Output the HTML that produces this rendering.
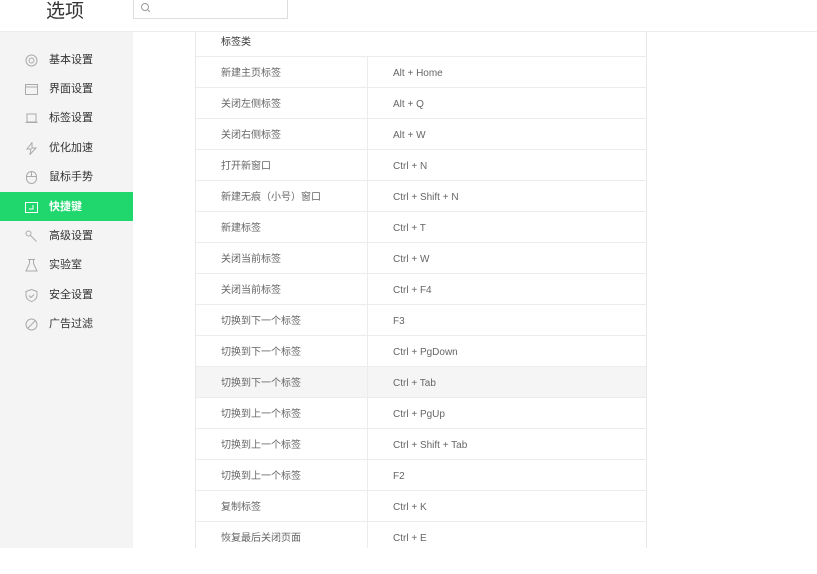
<!DOCTYPE html>
<html><head><meta charset="utf-8"><style>
*{margin:0;padding:0;box-sizing:border-box}
body{width:817px;height:574px;background:#fff;font-family:"Liberation Sans","Noto Sans CJK SC",sans-serif;position:relative;overflow:hidden;color:#555}
.top{position:absolute;left:0;top:0;width:817px;height:32px;border-bottom:1px solid #ececec}
.title{position:absolute;left:46px;top:-4px;font-size:19px;color:#333}
.search{position:absolute;left:133px;top:-2px;width:155px;height:21px;border:1px solid #ddd;border-top:none}
.side{position:absolute;left:0;top:32px;width:133px;height:516px;background:#f4f4f4}
.item{position:absolute;left:0;width:133px;height:29px;font-size:11px;color:#333;line-height:31px}
.item span{position:absolute;left:49px}
.item svg{position:absolute;left:25px;top:9px}
.item.act{background:#1fd76c;color:#fff;font-weight:bold}
.tbl{position:absolute;left:195px;top:32px;width:452px;height:516px;border-left:1px solid #e8e8e8;border-right:1px solid #e8e8e8;overflow:hidden}
.row{position:absolute;left:0;width:450px;height:31px;border-bottom:1px solid #ececec;font-size:10px;line-height:34px;color:#666}
.row .a{position:absolute;left:25px}
.row .b{position:absolute;left:171px;top:0;height:30px;border-left:1px solid #ececec;padding-left:25px}
.hd{top:0;height:25px;line-height:22px;color:#333}
</style></head><body>
<div class="top"><div class="title">选项</div><div class="search"><svg width="12" height="12" style="position:absolute;left:6px;top:4px" viewBox="0 0 12 12"><circle cx="5" cy="5" r="3.5" fill="none" stroke="#999" stroke-width="1"/><path d="M7.6 7.6L10 10" stroke="#999"/></svg></div></div>
<div class="side">
<div class="item" style="top:13px"><svg width="13" height="13" viewBox="0 0 13 13" fill="none" stroke="#aaa"><circle cx="6.5" cy="6.5" r="5.5"/><circle cx="6.5" cy="6.5" r="2.5"/></svg><span>基本设置</span></div>
<div class="item" style="top:42px"><svg width="13" height="13" viewBox="0 0 13 13" fill="none" stroke="#aaa"><rect x=".5" y="1.5" width="12" height="10"/><path d="M.5 4h12"/></svg><span>界面设置</span></div>
<div class="item" style="top:71px"><svg width="13" height="13" viewBox="0 0 13 13" fill="none" stroke="#aaa"><path d="M2 2h9v8H2zM.5 10.5h12"/></svg><span>标签设置</span></div>
<div class="item" style="top:101px"><svg width="13" height="13" viewBox="0 0 13 13" fill="none" stroke="#aaa"><path d="M7 .5L2 7h4l-1 5.5L11 6H7z"/></svg><span>优化加速</span></div>
<div class="item" style="top:130px"><svg width="13" height="13" viewBox="0 0 13 13" fill="none" stroke="#aaa"><rect x="1.5" y=".5" width="10" height="12" rx="5"/><path d="M1.5 5.5h10M6.5.5v5"/></svg><span>鼠标手势</span></div>
<div class="item act" style="top:160px"><svg width="13" height="13" viewBox="0 0 13 13" fill="none" stroke="#fff"><rect x=".5" y="1.5" width="12" height="10"/><path d="M8 4v4H4"/></svg><span>快捷键</span></div>
<div class="item" style="top:189px"><svg width="13" height="13" viewBox="0 0 13 13" fill="none" stroke="#aaa"><circle cx="3.5" cy="3.5" r="2.5"/><path d="M5.5 5.5l6 6"/></svg><span>高级设置</span></div>
<div class="item" style="top:218px"><svg width="13" height="13" viewBox="0 0 13 13" fill="none" stroke="#aaa"><path d="M3 .5h7M4.5.5v4L1 12h11L8.5 4.5v-4"/></svg><span>实验室</span></div>
<div class="item" style="top:248px"><svg width="13" height="13" viewBox="0 0 13 13" fill="none" stroke="#aaa"><path d="M6.5.5L1 2.5v4c0 3 3 5.5 5.5 6 2.5-.5 5.5-3 5.5-6v-4z"/><path d="M4 6.5l2 2 3-3"/></svg><span>安全设置</span></div>
<div class="item" style="top:277px"><svg width="13" height="13" viewBox="0 0 13 13" fill="none" stroke="#aaa"><circle cx="6.5" cy="6.5" r="5.5"/><path d="M2.6 10.4l7.8-7.8"/></svg><span>广告过滤</span></div>
</div>
<div class="tbl">
<div class="row hd"><span class="a" style="color:#333">标签类</span></div>
<div class="row" style="top:25px"><span class="a">新建主页标签</span><span class="b">Alt + Home</span></div>
<div class="row" style="top:56px"><span class="a">关闭左侧标签</span><span class="b">Alt + Q</span></div>
<div class="row" style="top:87px"><span class="a">关闭右侧标签</span><span class="b">Alt + W</span></div>
<div class="row" style="top:118px"><span class="a">打开新窗口</span><span class="b">Ctrl + N</span></div>
<div class="row" style="top:149px"><span class="a">新建无痕（小号）窗口</span><span class="b">Ctrl + Shift + N</span></div>
<div class="row" style="top:180px"><span class="a">新建标签</span><span class="b">Ctrl + T</span></div>
<div class="row" style="top:211px"><span class="a">关闭当前标签</span><span class="b">Ctrl + W</span></div>
<div class="row" style="top:242px"><span class="a">关闭当前标签</span><span class="b">Ctrl + F4</span></div>
<div class="row" style="top:273px"><span class="a">切换到下一个标签</span><span class="b">F3</span></div>
<div class="row" style="top:304px"><span class="a">切换到下一个标签</span><span class="b">Ctrl + PgDown</span></div>
<div class="row" style="top:335px;background:#f5f5f5"><span class="a">切换到下一个标签</span><span class="b">Ctrl + Tab</span></div>
<div class="row" style="top:366px"><span class="a">切换到上一个标签</span><span class="b">Ctrl + PgUp</span></div>
<div class="row" style="top:397px"><span class="a">切换到上一个标签</span><span class="b">Ctrl + Shift + Tab</span></div>
<div class="row" style="top:428px"><span class="a">切换到上一个标签</span><span class="b">F2</span></div>
<div class="row" style="top:459px"><span class="a">复制标签</span><span class="b">Ctrl + K</span></div>
<div class="row" style="top:490px"><span class="a">恢复最后关闭页面</span><span class="b">Ctrl + E</span></div>
</div>
</body></html>
